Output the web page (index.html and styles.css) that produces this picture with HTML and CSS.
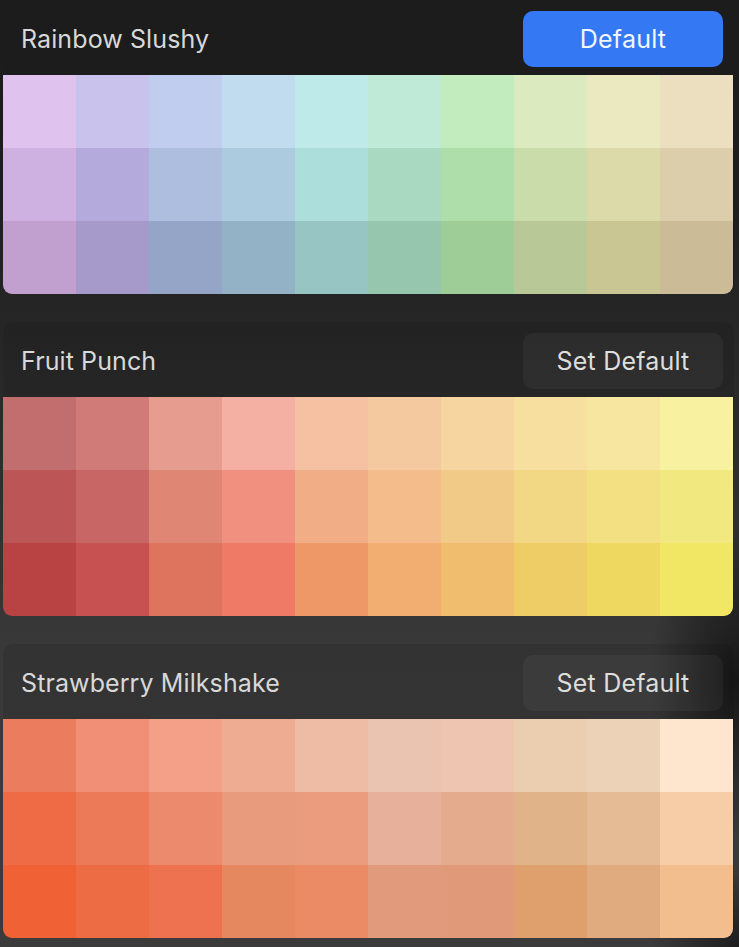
FILE: index.html
```html
<!DOCTYPE html>
<html lang="en">
<head>
    <meta charset="UTF-8">
    <meta name="viewport" content="width=device-width, initial-scale=1.0">
    <title>Palettes</title>
    <link rel="stylesheet" href="styles.css">
</head>
<body>
    <div id="danh-sach-bang-mau"></div>

    <script>
        /* du lieu cac bang mau: 3 hang x 10 cot */
        var danhSachBangMau = [
            {
                ten: 'Rainbow Slushy',
                macDinh: true,
                mau: [
                    ['#dfc2ee', '#c9c2ed', '#c1cdee', '#c0dcee', '#bfeaea', '#bfead7', '#c2ecbe', '#dcebbf', '#ebe9bf', '#ecdfbf'],
                    ['#cfb1e1', '#b4aadb', '#aebedf', '#adcbdf', '#acdedb', '#a9d9c1', '#aedea9', '#cbdcab', '#dddaa9', '#dccdab'],
                    ['#c1a0d0', '#a59aca', '#95a5c7', '#94b2c6', '#97c5c4', '#96c6ae', '#9ecd98', '#b8c897', '#c9c694', '#cbbc97']
                ]
            },
            {
                ten: 'Fruit Punch',
                macDinh: false,
                mau: [
                    ['#c36e6e', '#d17b79', '#e69d8f', '#f4b0a2', '#f6c1a2', '#f5c9a0', '#f6d5a1', '#f7e09f', '#f7e69f', '#f7f1a0'],
                    ['#bc5656', '#c86666', '#e08675', '#f2907f', '#f1ad86', '#f4bc8a', '#f2ca88', '#f2d884', '#f2e083', '#f1e980'],
                    ['#b94242', '#c75050', '#de735e', '#ef7b66', '#ee9867', '#f1ae70', '#f0bd6f', '#efcd66', '#eed860', '#f1e765']
                ]
            },
            {
                ten: 'Strawberry Milkshake',
                macDinh: false,
                mau: [
                    ['#ec7c5e', '#f08f76', '#f49f87', '#eeac92', '#eebba5', '#ebc3b1', '#edc5b1', '#ebcdb0', '#ecd3b8', '#fee5cd'],
                    ['#ee6b45', '#ec7a58', '#ec8a6d', '#e99c7d', '#eb9c7e', '#e6b09a', '#e4ab8d', '#e1b388', '#e5bb95', '#f6cda7'],
                    ['#f06236', '#ee6c43', '#ef7250', '#e5885f', '#eb8b65', '#e29a7d', '#e09a7a', '#dfa06d', '#e0ab7e', '#f3be8d']
                ]
            }
        ];

        function veBangMau(){
            var nodeDanhSach = document.getElementById('danh-sach-bang-mau');
            var html = '';
            for (var i = 0; i < danhSachBangMau.length; i++){
                var bangMau = danhSachBangMau[i];
                html += '<div class="bang-mau">';
                html += '<div class="tieu-de">';
                html += '<span class="ten">' + bangMau.ten + '</span>';
                if (bangMau.macDinh == true)
                    html += '<button class="nut nut-mac-dinh">Default</button>';
                else
                    html += '<button class="nut">Set Default</button>';
                html += '</div>';
                html += '<div class="luoi-mau">';
                for (var h = 0; h < bangMau.mau.length; h++){
                    for (var c = 0; c < bangMau.mau[h].length; c++){
                        html += '<div class="o-mau" style="background:' + bangMau.mau[h][c] + '"></div>';
                    }
                }
                html += '</div>';
                html += '</div>';
            }
            nodeDanhSach.innerHTML = html;
        }
        veBangMau();
    </script>
</body>
</html>
```

FILE: styles.css
```css
*{
    box-sizing: border-box;
    padding: 0;
    margin: 0;
}

html, body{
    height: 100%;
}

body{
    font-family: Inter, "Noto Sans", "Liberation Sans", sans-serif;
    background:
        radial-gradient(ellipse 90px 160px at 739px 680px, rgba(10, 10, 10, 0.75), rgba(10, 10, 10, 0)),
        radial-gradient(ellipse 90px 80px at 739px 947px, rgba(10, 10, 10, 0.6), rgba(10, 10, 10, 0)),
        linear-gradient(180deg, #1c1c1c 0px, #1e1e1e 200px, #262626 320px, #2f2f2f 500px, #393939 650px, #3b3b3b 947px);
    overflow: hidden;
}

#danh-sach-bang-mau{
    display: flex;
    flex-direction: column;
    gap: 28px;
    padding-left: 3px;
    width: 736px;
}

.bang-mau{
    width: 731px;
    border-radius: 10px;
    background: rgba(0, 0, 0, 0.09);
}

.bang-mau:first-child{
    background: #1c1c1c;
}

.tieu-de{
    height: 75px;
    display: flex;
    align-items: center;
    justify-content: space-between;
    padding: 0 11px 0 18px;
}

.ten{
    font-size: 25px;
    color: #d8d8d8;
    letter-spacing: 0.1px;
    margin-top: 2px;
}

.nut{
    width: 200px;
    height: 56px;
    margin-top: 3px;
    border: none;
    border-radius: 10px;
    background: rgba(255, 255, 255, 0.045);
    color: #dedede;
    font-family: Inter, "Noto Sans", "Liberation Sans", sans-serif;
    font-size: 25px;
    letter-spacing: 0.2px;
}

.nut-mac-dinh{
    background: #3478f4;
    color: #f2f6ff;
}

.luoi-mau{
    display: grid;
    grid-template-columns: repeat(10, 73px);
    grid-template-rows: repeat(3, 73px);
    border-radius: 0 0 9px 9px;
    overflow: hidden;
    width: 730px;
}
```
